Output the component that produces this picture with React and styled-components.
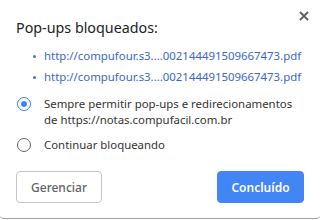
import React from "react";
import styled, { createGlobalStyle } from "styled-components";

const Global = createGlobalStyle`
  html, body { margin: 0; padding: 0; background: #fff; }
  body { font-family: "Noto Sans", "Open Sans", sans-serif; }
`;

const Dialog = styled.div`
  position: relative;
  width: 320px;
  height: 219px;
  box-sizing: border-box;
  background: #fff;
  border-bottom: 1px solid #a0a0a0;
  border-bottom-left-radius: 4px;
  border-bottom-right-radius: 4px;
  padding: 16px 16px 0 16px;
  display: flex;
  flex-direction: column;
`;

const Title = styled.h1`
  margin: 0;
  font-size: 14.3px;
  font-weight: 400;
  color: #202124;
  line-height: 24px;
`;

const Close = styled.button`
  position: absolute;
  top: 9px;
  right: 10px;
  width: 13px;
  height: 13px;
  padding: 0;
  border: 0;
  background: none;
  display: flex;
  align-items: center;
  justify-content: center;
`;

const LinkList = styled.ul`
  margin: 8px 0 0 0;
  padding: 0 0 0 17px;
  list-style: none;
  display: flex;
  flex-direction: column;
  gap: 5px;
`;

const LinkItem = styled.li`
  display: flex;
  align-items: center;
  font-size: 11.4px;
  line-height: 16px;
  color: #3b67c6;
  white-space: nowrap;
  &::before {
    content: "";
    flex: none;
    width: 3px;
    height: 3px;
    border-radius: 50%;
    background: #4a72c8;
    margin-right: 8px;
  }
`;

const Options = styled.div`
  margin-top: 11px;
  display: flex;
  flex-direction: column;
  gap: 9px;
`;

const Option = styled.label`
  display: flex;
  align-items: flex-start;
  gap: 13px;
  padding-left: 1px;
  font-size: 11.4px;
  line-height: 16px;
  color: #333;
`;

const Radio = styled.span`
  flex: none;
  width: 14px;
  height: 14px;
  margin-top: 1px;
  box-sizing: border-box;
  border-radius: 50%;
  border: 1.5px solid ${(p) => (p.checked ? "#4285f4" : "#5f6368")};
  display: flex;
  align-items: center;
  justify-content: center;
  &::after {
    content: "";
    width: 6px;
    height: 6px;
    border-radius: 50%;
    background: ${(p) => (p.checked ? "#4285f4" : "transparent")};
  }
`;

const Buttons = styled.div`
  margin-top: auto;
  margin-bottom: 15px;
  display: flex;
  justify-content: space-between;
`;

const Button = styled.button`
  height: 32px;
  box-sizing: border-box;
  border-radius: 4px;
  font-family: inherit;
  font-size: 12px;
  padding: 0;
  width: ${(p) => p.w}px;
  border: 1px solid ${(p) => (p.primary ? "#4285f4" : "#c4c4c4")};
  background: ${(p) => (p.primary ? "#4285f4" : "#fff")};
  color: ${(p) => (p.primary ? "#fff" : "#5f6368")};
  font-weight: ${(p) => (p.primary ? 600 : 500)};
`;

export default function App() {
  return (
    <>
      <Global />
      <Dialog>
        <Title>Pop-ups bloqueados:</Title>
        <Close aria-label="Fechar">
          <svg width="10" height="10" viewBox="0 0 10 10">
            <path d="M1 1L9 9M9 1L1 9" stroke="#5f6368" strokeWidth="2" />
          </svg>
        </Close>
        <LinkList>
          <LinkItem>http://compufour.s3....002144491509667473.pdf</LinkItem>
          <LinkItem>http://compufour.s3....002144491509667473.pdf</LinkItem>
        </LinkList>
        <Options>
          <Option>
            <Radio checked />
            <span>
              Sempre permitir pop-ups e redirecionamentos
              <br />
              de https://notas.compufacil.com.br
            </span>
          </Option>
          <Option>
            <Radio />
            <span>Continuar bloqueando</span>
          </Option>
        </Options>
        <Buttons>
          <Button w={86}>Gerenciar</Button>
          <Button primary w={87}>Concluído</Button>
        </Buttons>
      </Dialog>
    </>
  );
}
